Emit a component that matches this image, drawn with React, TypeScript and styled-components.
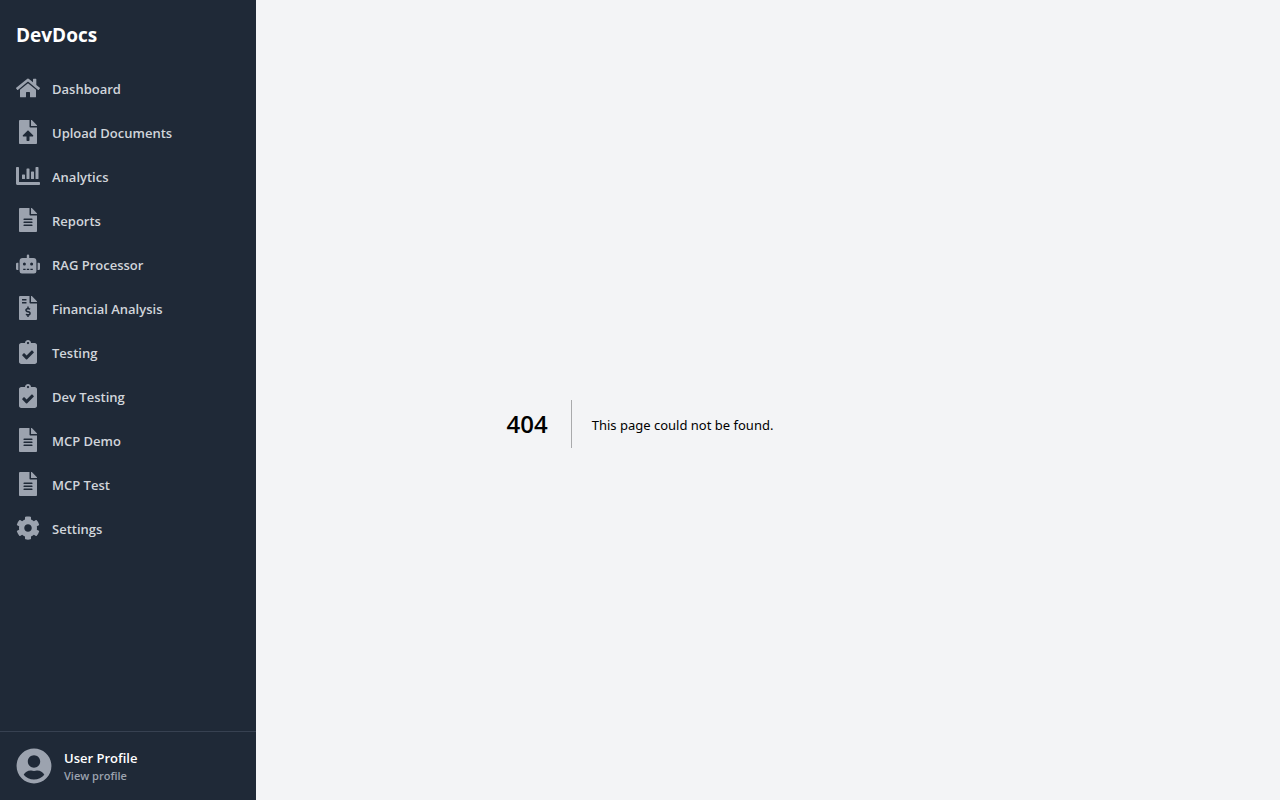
import React from "react";
import styled, { createGlobalStyle } from "styled-components";
import type { IconType } from "react-icons";
import {
  FaChartBar,
  FaClipboardCheck,
  FaCog,
  FaFileAlt,
  FaFileInvoiceDollar,
  FaFileUpload,
  FaHome,
  FaRobot,
  FaUserCircle,
} from "react-icons/fa";

const GlobalStyle = createGlobalStyle`
  *, *::before, *::after { box-sizing: border-box; }
  body {
    margin: 0;
    font-family: "Open Sans", "Noto Sans", sans-serif;
    background: #f3f4f6;
    color: #000;
  }
  h1, h2, p, ul { margin: 0; padding: 0; }
`;

const Page = styled.div`
  display: flex;
  min-height: 100vh;
`;

const Sidebar = styled.aside`
  display: flex;
  flex-direction: column;
  flex: 0 0 256px;
  padding-top: 20px;
  background: #1f2937;
`;

const Brand = styled.p`
  padding: 0 16px;
  font-size: 19px;
  line-height: 30px;
  font-weight: 700;
  color: #fff;
`;

const Nav = styled.nav`
  flex: 1;
  margin-top: 18px;
  padding: 0 8px;
`;

const NavList = styled.ul`
  display: flex;
  flex-direction: column;
  gap: 4px;
  list-style: none;
`;

const NavLink = styled.a`
  display: flex;
  align-items: center;
  gap: 12px;
  padding: 8px;
  border-radius: 6px;
  font-size: 13px;
  line-height: 22px;
  font-weight: 600;
  color: #d1d5db;
  text-decoration: none;

  svg {
    flex: none;
    color: #9ca3af;
  }

  &:hover {
    background: #374151;
    color: #fff;
  }
`;

const NavLabel = styled.span`
  padding-top: 2px;
`;

const Profile = styled.a`
  display: flex;
  align-items: center;
  gap: 12px;
  padding: 16px;
  border-top: 1px solid #374151;
  color: #9ca3af;
  text-decoration: none;
`;

const ProfileName = styled.p`
  font-size: 13px;
  line-height: 20px;
  font-weight: 600;
  color: #fff;
`;

const ProfileHint = styled.p`
  font-size: 11px;
  line-height: 16px;
  font-weight: 600;
`;

const Main = styled.main`
  display: flex;
  flex: 1;
  align-items: center;
  justify-content: center;
  padding: 48px 256px 0 0;
`;

const ErrorMessage = styled.div`
  display: flex;
  align-items: center;
`;

const ErrorCode = styled.h1`
  margin-right: 20px;
  padding-right: 23px;
  border-right: 1px solid rgba(0, 0, 0, 0.3);
  font-size: 24px;
  line-height: 48px;
  font-weight: 600;
`;

const ErrorText = styled.h2`
  padding-top: 2px;
  font-family: "Noto Sans", sans-serif;
  font-size: 13px;
  line-height: 28px;
  font-weight: 400;
`;

const links: { label: string; href: string; icon: IconType }[] = [
  { label: "Dashboard", href: "#dashboard", icon: FaHome },
  { label: "Upload Documents", href: "#upload", icon: FaFileUpload },
  { label: "Analytics", href: "#analytics", icon: FaChartBar },
  { label: "Reports", href: "#reports", icon: FaFileAlt },
  { label: "RAG Processor", href: "#rag", icon: FaRobot },
  { label: "Financial Analysis", href: "#financial", icon: FaFileInvoiceDollar },
  { label: "Testing", href: "#testing", icon: FaClipboardCheck },
  { label: "Dev Testing", href: "#dev-testing", icon: FaClipboardCheck },
  { label: "MCP Demo", href: "#mcp-demo", icon: FaFileAlt },
  { label: "MCP Test", href: "#mcp-test", icon: FaFileAlt },
  { label: "Settings", href: "#settings", icon: FaCog },
];

export default function App() {
  return (
    <>
      <GlobalStyle />
      <Page>
        <Sidebar>
          <Brand>DevDocs</Brand>
          <Nav>
            <NavList>
              {links.map(({ label, href, icon: Icon }) => (
                <li key={href}>
                  <NavLink href={href}>
                    <Icon size={24} aria-hidden />
                    <NavLabel>{label}</NavLabel>
                  </NavLink>
                </li>
              ))}
            </NavList>
          </Nav>
          <Profile href="#profile">
            <FaUserCircle size={36} aria-hidden />
            <div>
              <ProfileName>User Profile</ProfileName>
              <ProfileHint>View profile</ProfileHint>
            </div>
          </Profile>
        </Sidebar>
        <Main>
          <ErrorMessage>
            <ErrorCode>404</ErrorCode>
            <ErrorText>This page could not be found.</ErrorText>
          </ErrorMessage>
        </Main>
      </Page>
    </>
  );
}
